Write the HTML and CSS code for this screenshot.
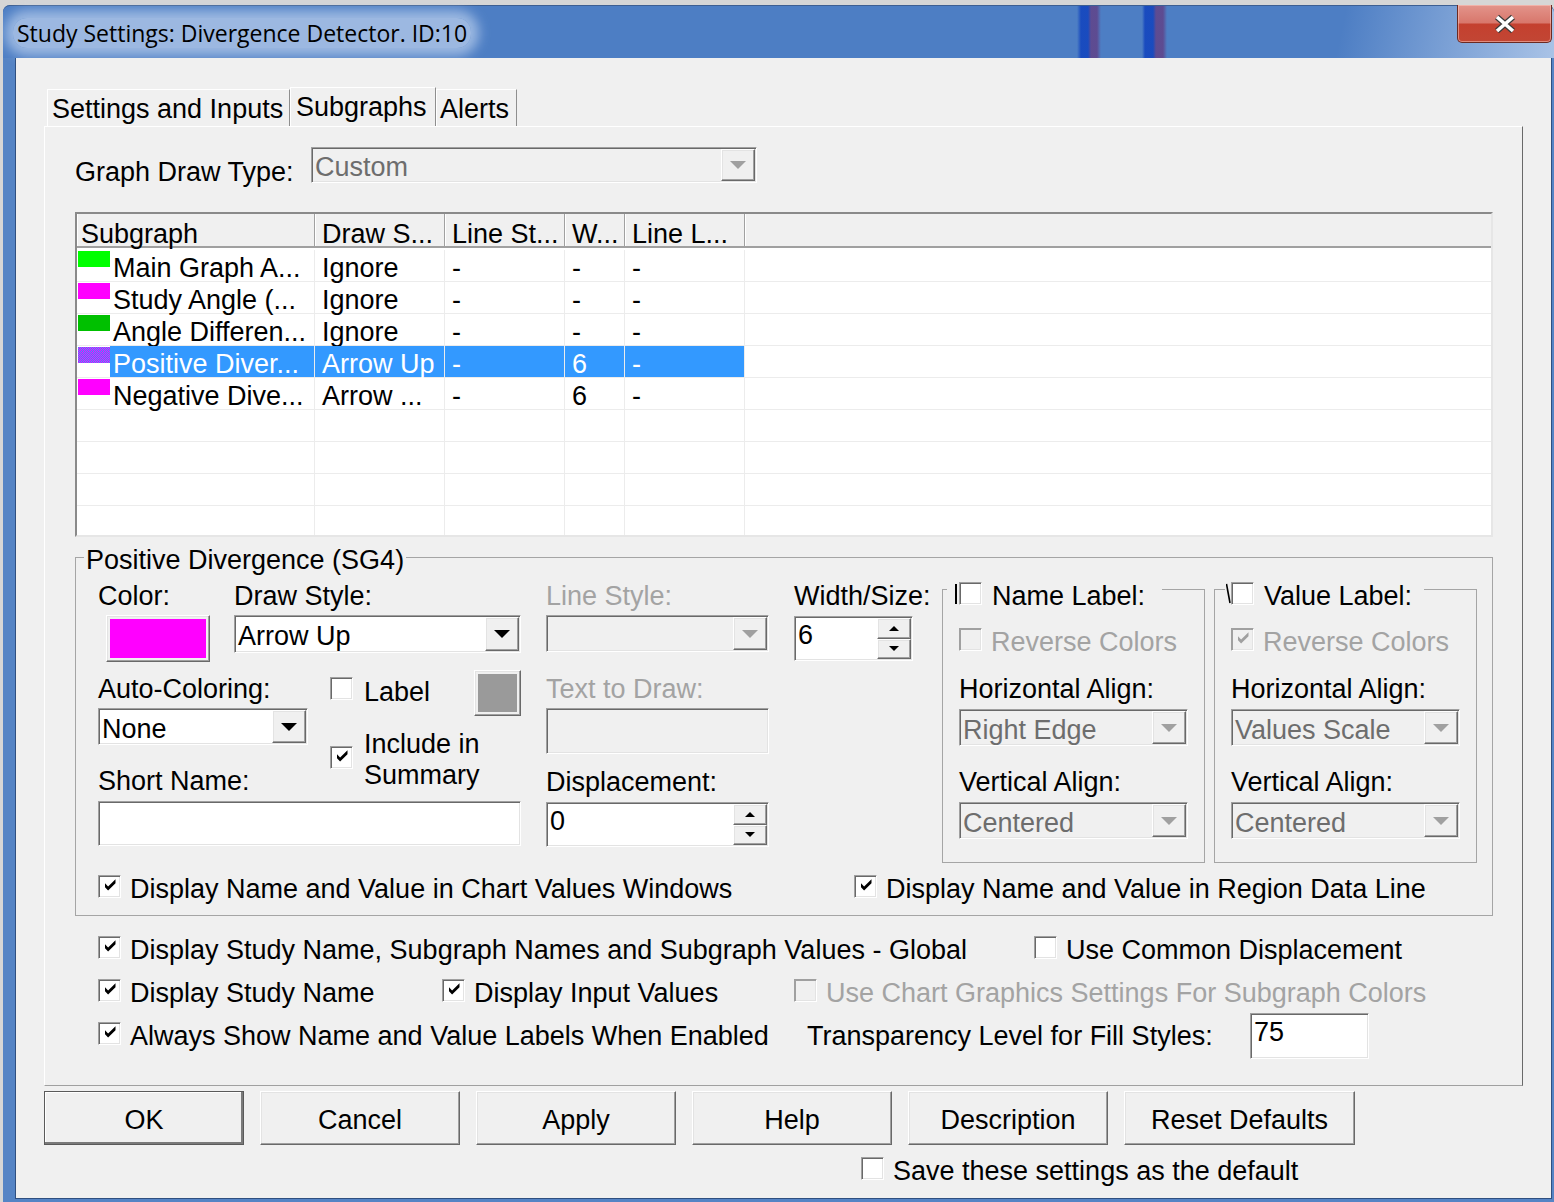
FILE: index.html
```html
<!DOCTYPE html>
<html lang="en">

<head>
    <meta charset="UTF-8">
    <title>Study Settings: Divergence Detector. ID:10</title>
    <link rel="stylesheet" href="styles.css">
</head>

<body>
    <div class="window">
        <div class="titlebar">
            <span class="title">Study Settings: Divergence Detector. ID:10</span>
            <div class="close">
                <svg width="24" height="20" viewBox="0 0 24 20">
                    <path d="M4 3 L20 17 M20 3 L4 17" stroke="#3a3a3a" stroke-width="6" />
                    <path d="M4 3 L20 17 M20 3 L4 17" stroke="#fff" stroke-width="3.6" />
                </svg>
            </div>
        </div>

        <div class="client">
            <div class="tabstrip">
                <div class="tab tab-settings">Settings and Inputs</div>
                <div class="tab tab-subgraphs active">Subgraphs</div>
                <div class="tab tab-alerts">Alerts</div>
            </div>

            <div class="panel">
                <div class="drawtype-row">
                    <span class="drawtype-label">Graph Draw Type:</span>
                    <div class="combo sunken disabled drawtype-combo">
                        <span class="combo-text">Custom</span>
                        <span class="dd raised"><i class="tri dis"></i></span>
                    </div>
                </div>

                <div class="grid-list">
                    <div class="gl-head">
                        <div class="gh c1">Subgraph</div>
                        <div class="gh c2">Draw S...</div>
                        <div class="gh c3">Line St...</div>
                        <div class="gh c4">W...</div>
                        <div class="gh c5">Line L...</div>
                        <div class="gh c6"></div>
                    </div>
                    <div class="gl-body">
                        <div class="gl-row">
                            <div class="gc c1"><i class="swatch sw-lime"></i><span class="name">Main Graph A...</span></div>
                            <div class="gc c2">Ignore</div>
                            <div class="gc c3">-</div>
                            <div class="gc c4">-</div>
                            <div class="gc c5">-</div>
                            <div class="gc c6"></div>
                        </div>
                        <div class="gl-row">
                            <div class="gc c1"><i class="swatch sw-magenta"></i><span class="name">Study Angle (...</span></div>
                            <div class="gc c2">Ignore</div>
                            <div class="gc c3">-</div>
                            <div class="gc c4">-</div>
                            <div class="gc c5">-</div>
                            <div class="gc c6"></div>
                        </div>
                        <div class="gl-row">
                            <div class="gc c1"><i class="swatch sw-green"></i><span class="name">Angle Differen...</span></div>
                            <div class="gc c2">Ignore</div>
                            <div class="gc c3">-</div>
                            <div class="gc c4">-</div>
                            <div class="gc c5">-</div>
                            <div class="gc c6"></div>
                        </div>
                        <div class="gl-row sel">
                            <div class="gc c1"><i class="swatch sw-dither"></i><span class="name">Positive Diver...</span></div>
                            <div class="gc c2">Arrow Up</div>
                            <div class="gc c3">-</div>
                            <div class="gc c4">6</div>
                            <div class="gc c5">-</div>
                            <div class="gc c6"></div>
                        </div>
                        <div class="gl-row">
                            <div class="gc c1"><i class="swatch sw-magenta"></i><span class="name">Negative Dive...</span></div>
                            <div class="gc c2">Arrow ...</div>
                            <div class="gc c3">-</div>
                            <div class="gc c4">6</div>
                            <div class="gc c5">-</div>
                            <div class="gc c6"></div>
                        </div>
                        <div class="gl-row"><div class="gc c1"></div><div class="gc c2"></div><div class="gc c3"></div><div class="gc c4"></div><div class="gc c5"></div><div class="gc c6"></div></div>
                        <div class="gl-row"><div class="gc c1"></div><div class="gc c2"></div><div class="gc c3"></div><div class="gc c4"></div><div class="gc c5"></div><div class="gc c6"></div></div>
                        <div class="gl-row"><div class="gc c1"></div><div class="gc c2"></div><div class="gc c3"></div><div class="gc c4"></div><div class="gc c5"></div><div class="gc c6"></div></div>
                        <div class="gl-row"><div class="gc c1"></div><div class="gc c2"></div><div class="gc c3"></div><div class="gc c4"></div><div class="gc c5"></div><div class="gc c6"></div></div>
                    </div>
                </div>

                <fieldset class="sg-group">
                    <legend>Positive Divergence (SG4)</legend>
                    <div class="sg-cols">
                        <div class="col-main">
                            <div class="main-row1">
                                <div class="color-block">
                                    <div class="lbl">Color:</div>
                                    <div class="color-btn raised"><i class="color-fill"></i></div>
                                </div>
                                <div class="style-block">
                                    <div class="lbl">Draw Style:</div>
                                    <div class="combo sunken h38">
                                        <span class="combo-text">Arrow Up</span>
                                        <span class="dd raised"><i class="tri"></i></span>
                                    </div>
                                </div>
                            </div>
                            <div class="main-row2">
                                <div class="auto-block">
                                    <div class="lbl auto-lbl">Auto-Coloring:</div>
                                    <div class="combo sunken auto-combo">
                                        <span class="combo-text">None</span>
                                        <span class="dd raised"><i class="tri"></i></span>
                                    </div>
                                    <div class="lbl short-lbl">Short Name:</div>
                                </div>
                                <div class="opt-block">
                                    <div class="label-row">
                                        <span class="chk label-chk"></span>
                                        <span class="label-text">Label</span>
                                        <div class="gray-btn raised"><i class="gray-fill"></i></div>
                                    </div>
                                    <div class="include-row">
                                        <span class="chk"><svg viewBox="1 1 21 21"><path d="M7 8.3 10.1 11.4 17.5 4.2v4L10.1 15.4 7 12.3z" /></svg></span>
                                        <span class="txt">Include in<br>Summary</span>
                                    </div>
                                </div>
                            </div>
                            <div class="edit sunken short-edit"></div>
                        </div>

                        <div class="col-line">
                            <div class="lbl dis-text">Line Style:</div>
                            <div class="combo sunken disabled line-combo">
                                <span class="combo-text"></span>
                                <span class="dd raised"><i class="tri dis"></i></span>
                            </div>
                            <div class="lbl dis-text text-lbl">Text to Draw:</div>
                            <div class="edit sunken disabled text-edit"></div>
                            <div class="lbl disp-lbl">Displacement:</div>
                            <div class="spin sunken disp-spin">
                                <span class="spin-val">0</span>
                                <span class="spin-btns">
                                    <span class="spin-btn raised"><i class="tri-up"></i></span>
                                    <span class="spin-btn raised"><i class="tri-down"></i></span>
                                </span>
                            </div>
                        </div>

                        <div class="col-width">
                            <div class="lbl">Width/Size:</div>
                            <div class="spin sunken width-spin">
                                <span class="spin-val">6</span>
                                <span class="spin-btns">
                                    <span class="spin-btn raised"><i class="tri-up"></i></span>
                                    <span class="spin-btn raised"><i class="tri-down"></i></span>
                                </span>
                            </div>
                        </div>

                        <div class="labelbox name-box">
                            <div class="box-head">
                                <i class="cut-bar"></i>
                                <span class="chk"></span>
                                <span class="head-text txt">Name Label:</span>
                            </div>
                            <div class="chk-item reverse-row">
                                <span class="chk disabled"></span>
                                <span class="dis-text txt">Reverse Colors</span>
                            </div>
                            <div class="lbl halign-lbl">Horizontal Align:</div>
                            <div class="combo sunken disabled align-combo">
                                <span class="combo-text">Right Edge</span>
                                <span class="dd raised"><i class="tri dis"></i></span>
                            </div>
                            <div class="lbl valign-lbl">Vertical Align:</div>
                            <div class="combo sunken disabled align-combo">
                                <span class="combo-text">Centered</span>
                                <span class="dd raised"><i class="tri dis"></i></span>
                            </div>
                        </div>

                        <div class="labelbox value-box">
                            <div class="box-head">
                                <svg class="cut-v" width="5" height="22" viewBox="0 0 5 22"><path d="M0.5 1 L4 20" stroke="#000" stroke-width="1.6" /></svg>
                                <span class="chk"></span>
                                <span class="head-text txt">Value Label:</span>
                            </div>
                            <div class="chk-item reverse-row">
                                <span class="chk disabled"><svg viewBox="1 1 21 21"><path d="M7 8.3 10.1 11.4 17.5 4.2v4L10.1 15.4 7 12.3z" /></svg></span>
                                <span class="dis-text txt">Reverse Colors</span>
                            </div>
                            <div class="lbl halign-lbl">Horizontal Align:</div>
                            <div class="combo sunken disabled align-combo">
                                <span class="combo-text">Values Scale</span>
                                <span class="dd raised"><i class="tri dis"></i></span>
                            </div>
                            <div class="lbl valign-lbl">Vertical Align:</div>
                            <div class="combo sunken disabled align-combo">
                                <span class="combo-text">Centered</span>
                                <span class="dd raised"><i class="tri dis"></i></span>
                            </div>
                        </div>
                    </div>

                    <div class="sg-bottom">
                        <div class="chk-item chart-values">
                            <span class="chk"><svg viewBox="1 1 21 21"><path d="M7 8.3 10.1 11.4 17.5 4.2v4L10.1 15.4 7 12.3z" /></svg></span>
                            <span class="txt">Display Name and Value in Chart Values Windows</span>
                        </div>
                        <div class="chk-item">
                            <span class="chk"><svg viewBox="1 1 21 21"><path d="M7 8.3 10.1 11.4 17.5 4.2v4L10.1 15.4 7 12.3z" /></svg></span>
                            <span class="txt">Display Name and Value in Region Data Line</span>
                        </div>
                    </div>
                </fieldset>

                <div class="global">
                    <div class="g-row">
                        <div class="chk-item g-wide">
                            <span class="chk"><svg viewBox="1 1 21 21"><path d="M7 8.3 10.1 11.4 17.5 4.2v4L10.1 15.4 7 12.3z" /></svg></span>
                            <span class="txt">Display Study Name, Subgraph Names and Subgraph Values - Global</span>
                        </div>
                        <div class="chk-item">
                            <span class="chk"></span>
                            <span class="txt">Use Common Displacement</span>
                        </div>
                    </div>
                    <div class="g-row">
                        <div class="chk-item g-study">
                            <span class="chk"><svg viewBox="1 1 21 21"><path d="M7 8.3 10.1 11.4 17.5 4.2v4L10.1 15.4 7 12.3z" /></svg></span>
                            <span class="txt">Display Study Name</span>
                        </div>
                        <div class="chk-item g-inputs">
                            <span class="chk"><svg viewBox="1 1 21 21"><path d="M7 8.3 10.1 11.4 17.5 4.2v4L10.1 15.4 7 12.3z" /></svg></span>
                            <span class="txt">Display Input Values</span>
                        </div>
                        <div class="chk-item">
                            <span class="chk disabled"></span>
                            <span class="dis-text txt">Use Chart Graphics Settings For Subgraph Colors</span>
                        </div>
                    </div>
                    <div class="g-row">
                        <div class="chk-item g-always">
                            <span class="chk"><svg viewBox="1 1 21 21"><path d="M7 8.3 10.1 11.4 17.5 4.2v4L10.1 15.4 7 12.3z" /></svg></span>
                            <span class="txt">Always Show Name and Value Labels When Enabled</span>
                        </div>
                        <span class="g-transp txt">Transparency Level for Fill Styles:</span>
                        <div class="edit sunken transp-edit"><span class="edit-val">75</span></div>
                    </div>
                </div>
            </div>

            <div class="buttons">
                <div class="btn default">OK</div>
                <div class="btn">Cancel</div>
                <div class="btn">Apply</div>
                <div class="btn">Help</div>
                <div class="btn">Description</div>
                <div class="btn wide">Reset Defaults</div>
            </div>

            <div class="save-row chk-item">
                <span class="chk"></span>
                <span class="txt">Save these settings as the default</span>
            </div>
        </div>
    </div>
</body>

</html>
```

FILE: styles.css
```css
* {
    box-sizing: border-box;
}

body {
    margin: 0;
    background: #d6d6d6;
    font-family: "Liberation Sans", Arial, sans-serif;
    font-size: 27px;
    line-height: 31px;
    color: #000;
    overflow: hidden;
}

/* text sits a little low in its 31px line, like the original dialog font */
.txt {
    padding-top: 3px;
    margin-bottom: -3px;
}

/* window frame */
.window {
    width: 1551px;
    height: 1197px;
    margin: 5px 0 0 3px;
    background: #5584c5;
    border-radius: 7px 7px 0 0;
    display: flex;
    flex-direction: column;
}

.titlebar {
    height: 53px;
    flex: none;
    display: flex;
    justify-content: space-between;
    align-items: flex-start;
    border-radius: 7px 7px 0 0;
    border-top: 1px solid #3d5f92;
    background:
        linear-gradient(to right, transparent 1074px, rgba(20, 70, 190, .9) 1078px, rgba(20, 70, 190, .9) 1085px, rgba(95, 70, 140, .9) 1088px, rgba(95, 70, 140, .9) 1094px, transparent 1098px,
            transparent 1139px, rgba(20, 70, 190, .9) 1142px, rgba(20, 70, 190, .9) 1150px, rgba(95, 70, 140, .9) 1153px, rgba(95, 70, 140, .9) 1160px, transparent 1164px),
        linear-gradient(102deg, transparent 86%, rgba(200, 218, 242, .75) 100%),
        #4d7ec4;
}

.title {
    margin: 12px 0 0 10px;
    padding: 0 4px;
    font-family: "Open Sans", "Noto Sans", sans-serif;
    font-size: 23px;
    line-height: 30px;
    color: #000;
    background: rgba(190, 210, 238, .7);
    border-radius: 14px;
    box-shadow: 0 0 12px 8px rgba(190, 210, 238, .7);
}

.close {
    width: 95px;
    height: 38px;
    margin-right: 2px;
    margin-top: -1px;
    border: 1px solid #6b2a22;
    border-top: none;
    border-radius: 0 0 5px 5px;
    background: linear-gradient(#e3948b 0%, #d8776c 48%, #c4402f 52%, #c24634 100%);
    box-shadow: inset 0 0 0 1px rgba(255, 210, 200, .5);
    display: flex;
    align-items: center;
    justify-content: center;
}

.client {
    flex: 1;
    margin: 0 2px 3px 12px;
    background: #f0f0f0;
    border: 1px solid #2f4f80;
    border-top: none;
}

/* tabs */
.tabstrip {
    display: flex;
    align-items: flex-end;
    height: 39px;
    margin: 29px 0 0 28px;
    padding-left: 3px;
}

.tab {
    height: 37px;
    padding: 4px 0 0 4px;
    border: 1px solid;
    border-color: #fff #8e8e8e transparent #fff;
    border-bottom: none;
    white-space: nowrap;
}

.tab.active {
    height: 39px;
    padding-top: 4px;
}

.tab-settings {
    width: 243px;
}

.tab-subgraphs {
    width: 146px;
    padding-left: 5px;
}

.tab-alerts {
    width: 81px;
    padding-left: 3px;
}

.panel {
    margin-left: 28px;
    width: 1479px;
    height: 960px;
    border: 1px solid;
    border-color: #fff #696969 #a0a0a0 #fff;
    padding: 0 29px 0 30px;
}

/* common control looks */
.sunken {
    border: 1px solid;
    border-color: #a0a0a0 #fff #fff #a0a0a0;
    box-shadow: inset 1px 1px #696969, inset -1px -1px #e3e3e3;
    background: #fff;
}

.raised {
    border: 1px solid;
    border-color: #fff #696969 #696969 #fff;
    box-shadow: inset -1px -1px #a0a0a0, inset 1px 1px #e3e3e3;
    background: #f0f0f0;
}

.combo {
    display: flex;
    height: 37px;
}

.combo.h38 {
    height: 38px;
}

.combo-text {
    flex: 1;
    padding: 5px 0 0 3px;
    align-self: center;
    white-space: nowrap;
    overflow: hidden;
}

.disabled {
    background: #f0f0f0;
}

.disabled .combo-text {
    color: #6d6d6d;
}

.dd {
    width: 34px;
    margin: 1px 1px 1px 0;
    display: flex;
    align-items: center;
    justify-content: center;
}

.tri {
    width: 0;
    height: 0;
    border-left: 8px solid transparent;
    border-right: 8px solid transparent;
    border-top: 8px solid #000;
}

.tri.dis {
    border-top-color: #a0a0a0;
}

.edit {
    display: flex;
}

.spin {
    display: flex;
    height: 45px;
}

.spin-val,
.edit-val {
    flex: 1;
    padding: 3px 0 0 3px;
}

.spin-btns {
    width: 34px;
    margin: 1px 1px 1px 0;
    display: flex;
    flex-direction: column;
}

.spin-btn {
    flex: 1;
    display: flex;
    align-items: center;
    justify-content: center;
}

.tri-up,
.tri-down {
    width: 0;
    height: 0;
    border-left: 5px solid transparent;
    border-right: 5px solid transparent;
}

.tri-up {
    border-bottom: 5px solid #000;
}

.tri-down {
    border-top: 5px solid #000;
}

.chk {
    width: 23px;
    height: 23px;
    flex: none;
    display: inline-flex;
    border: 1px solid;
    border-color: #a0a0a0 #fff #fff #a0a0a0;
    box-shadow: inset 1px 1px #696969, inset -1px -1px #e3e3e3;
    background: #fff;
}

.chk svg {
    width: 21px;
    height: 21px;
    fill: #000;
}

.chk.disabled {
    background: #f0f0f0;
    box-shadow: inset 1px 1px #a0a0a0, inset -1px -1px #e3e3e3;
}

.chk.disabled svg {
    fill: #a0a0a0;
}

.chk-item {
    display: flex;
    align-items: center;
    gap: 9px;
    white-space: nowrap;
}

.dis-text {
    color: #a3a3a3;
}

/* graph draw type */
.drawtype-row {
    display: flex;
    margin-top: 20px;
    height: 36px;
}

.drawtype-label {
    width: 236px;
    margin-top: 10px;
}

.drawtype-combo {
    width: 446px;
    height: 36px;
}

/* subgraph list */
.grid-list {
    margin-top: 29px;
    width: 1418px;
    height: 325px;
    border: 2px solid;
    border-color: #8a8a8a #e6e6e6 #e6e6e6 #8a8a8a;
    background: #fff;
    overflow: hidden;
}

.gl-head,
.gl-row {
    display: flex;
}

.gl-head {
    height: 34px;
    background: #f0f0f0;
    border-bottom: 2px solid #a0a0a0;
    margin-bottom: 2px;
}

.gh {
    padding: 5px 0 0 7px;
    border-right: 1px solid #a0a0a0;
    box-shadow: inset 1px 0 #fff;
    white-space: nowrap;
}

.gh.c1 {
    padding-left: 4px;
}

.gh.c6,
.gc.c6 {
    border-right: none;
    flex: 1;
}

.c1 {
    width: 238px;
}

.c2 {
    width: 130px;
}

.c3 {
    width: 120px;
}

.c4 {
    width: 60px;
}

.c5 {
    width: 120px;
}

.gl-row {
    height: 32px;
    border-bottom: 1px solid #ececec;
}

.gc {
    padding: 3px 0 0 7px;
    border-right: 1px solid #ececec;
    white-space: nowrap;
}

.gc.c1 {
    padding: 0;
    display: flex;
    align-items: flex-start;
}

.swatch {
    width: 32px;
    height: 16px;
    margin: 1px 0 0 1px;
    flex: none;
}

.sw-lime {
    background: #00ff00;
}

.sw-magenta {
    background: #ff00ff;
}

.sw-green {
    background: #00c000;
}

.sw-dither {
    background: repeating-conic-gradient(#ff00ff 0 25%, #3399ff 0 50%) 0 0 / 2px 2px;
}

.name {
    flex: 1;
    height: 31px;
    padding: 3px 0 0 3px;
}

.sel .name,
.sel .c2,
.sel .c3,
.sel .c4,
.sel .c5 {
    background: #3399ff;
    color: #fff;
}

/* subgraph group box */
.sg-group {
    margin: 5px 0 0 0;
    width: 1418px;
    min-width: 0;
    border: 1px solid #a5a5a5;
    padding: 5px 14px 13px 22px;
}

.sg-group legend {
    padding: 6px 2px 0;
    margin-left: -14px;
    line-height: 25px;
}

.sg-cols {
    display: flex;
    align-items: flex-start;
}

.lbl {
    height: 31px;
    padding-top: 3px;
    white-space: nowrap;
}

.col-main {
    width: 423px;
}

.main-row1,
.main-row2 {
    display: flex;
    align-items: flex-start;
}

.color-block {
    width: 136px;
}

.color-btn {
    width: 104px;
    height: 47px;
    margin: 6px 0 0 8px;
    padding: 3px;
}

.color-fill {
    display: block;
    height: 100%;
    background: #ff00ff;
}

.style-block {
    width: 287px;
}

.style-block .combo {
    margin-top: 6px;
}

.auto-block {
    width: 232px;
}

.auto-lbl {
    margin-top: 9px;
}

.auto-combo {
    width: 210px;
    margin-top: 6px;
}

.short-lbl {
    margin-top: 18px;
}

.opt-block {
    width: 191px;
}

.label-row {
    display: flex;
    align-items: flex-start;
    margin-top: 8px;
    height: 46px;
}

.label-chk {
    margin-top: 7px;
}

.label-text {
    margin: 7px 0 0 11px;
}

.gray-btn {
    width: 47px;
    height: 46px;
    margin-left: auto;
    padding: 3px;
}

.gray-fill {
    display: block;
    height: 100%;
    background: #9a9a9a;
}

.include-row {
    display: flex;
    align-items: center;
    gap: 11px;
    margin-top: 10px;
}

.short-edit {
    width: 423px;
    height: 45px;
    margin-top: 7px;
}

.col-line {
    width: 223px;
    margin-left: 25px;
}

.line-combo {
    margin-top: 6px;
}

.text-lbl {
    margin-top: 19px;
}

.text-edit {
    height: 46px;
    margin-top: 6px;
}

.disp-lbl {
    margin-top: 10px;
}

.disp-spin {
    margin-top: 7px;
}

.col-width {
    width: 148px;
    margin-left: 25px;
}

.width-spin {
    width: 119px;
    margin-top: 7px;
}

/* name / value label boxes */
.labelbox {
    width: 263px;
    margin-top: 11px;
    border: 1px solid #a5a5a5;
    padding: 0 0 23px 16px;
}

.value-box {
    margin-left: 9px;
}

.box-head {
    display: flex;
    align-items: center;
    width: fit-content;
    margin: -12px 0 0 -12px;
    padding: 0 17px 0 8px;
    background: #f0f0f0;
    white-space: nowrap;
}

.value-box .box-head {
    margin-left: -6px;
    padding: 0 12px 0 1px;
}

.cut-bar {
    width: 2px;
    height: 20px;
    margin-right: 2px;
    background: #000;
}

.head-text {
    margin-left: 10px;
}

.reverse-row {
    margin-top: 15px;
}

.halign-lbl {
    margin-top: 16px;
}

.valign-lbl {
    margin-top: 18px;
}

.align-combo {
    width: 229px;
    margin-top: 7px;
}

.sg-bottom {
    display: flex;
    margin-top: 8px;
}

.chart-values {
    width: 756px;
}

/* global options */
.global {
    margin: 16px 0 0 23px;
    display: flex;
    flex-direction: column;
    gap: 12px;
}

.g-row {
    display: flex;
    align-items: flex-start;
    height: 31px;
}

.g-row .chk {
    margin-top: 4px;
}

.g-row .chk-item {
    align-items: flex-start;
}

.g-wide {
    width: 936px;
}

.g-study {
    width: 344px;
}

.g-inputs {
    width: 352px;
}

.g-always {
    width: 709px;
}

.g-transp {
    width: 443px;
    white-space: nowrap;
}

.transp-edit {
    width: 119px;
    height: 46px;
    margin-top: -5px;
}

/* bottom buttons */
.buttons {
    display: flex;
    gap: 16px;
    margin: 5px 0 0 28px;
}

.btn {
    width: 200px;
    height: 54px;
    padding-top: 4px;
    display: flex;
    align-items: center;
    justify-content: center;
    border: 1px solid;
    border-color: #fff #696969 #696969 #fff;
    box-shadow: inset -1px -1px #a0a0a0, inset 1px 1px #e3e3e3;
    background: #f0f0f0;
}

.btn.default {
    border-color: #5a5a5a;
    box-shadow: inset -2px -2px #7a7a7a, inset 1px 1px #fff;
}

.btn.wide {
    width: 231px;
}

.save-row {
    margin: 8px 0 0 845px;
}
```
